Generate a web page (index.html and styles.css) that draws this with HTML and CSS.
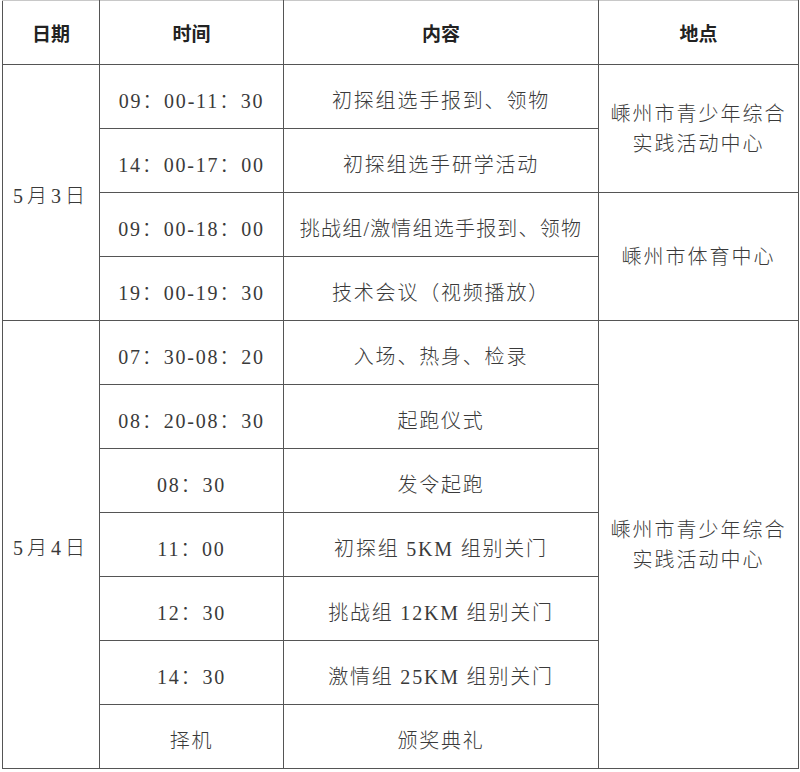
FILE: index.html
```html
<!DOCTYPE html>
<html lang="zh-CN">
<head>
<meta charset="utf-8">
<title>赛事日程</title>
<link rel="stylesheet" href="styles.css">
</head>
<body>
<table class="schedule">
  <colgroup>
    <col class="c-date">
    <col class="c-time">
    <col class="c-content">
    <col class="c-place">
  </colgroup>
  <thead>
    <tr>
      <th>日期</th>
      <th>时间</th>
      <th>内容</th>
      <th>地点</th>
    </tr>
  </thead>
  <tbody>
    <tr>
      <td class="date" rowspan="4">5月3日</td>
      <td>09：00-11：30</td>
      <td>初探组选手报到、领物</td>
      <td class="place" rowspan="2">嵊州市青少年综合<br>实践活动中心</td>
    </tr>
    <tr>
      <td>14：00-17：00</td>
      <td>初探组选手研学活动</td>
    </tr>
    <tr>
      <td>09：00-18：00</td>
      <td class="tight">挑战组/激情组选手报到、领物</td>
      <td class="place" rowspan="2">嵊州市体育中心</td>
    </tr>
    <tr>
      <td>19：00-19：30</td>
      <td>技术会议（视频播放）</td>
    </tr>
    <tr>
      <td class="date" rowspan="7">5月4日</td>
      <td>07：30-08：20</td>
      <td>入场、热身、检录</td>
      <td class="place" rowspan="7">嵊州市青少年综合<br>实践活动中心</td>
    </tr>
    <tr>
      <td>08：20-08：30</td>
      <td>起跑仪式</td>
    </tr>
    <tr>
      <td>08：30</td>
      <td>发令起跑</td>
    </tr>
    <tr>
      <td>11：00</td>
      <td>初探组 5KM 组别关门</td>
    </tr>
    <tr>
      <td>12：30</td>
      <td>挑战组 12KM 组别关门</td>
    </tr>
    <tr>
      <td>14：30</td>
      <td>激情组 25KM 组别关门</td>
    </tr>
    <tr>
      <td>择机</td>
      <td>颁奖典礼</td>
    </tr>
  </tbody>
</table>
</body>
</html>
```
FILE: styles.css
```css
html, body {
  margin: 0;
  padding: 0;
  background: #ffffff;
}

body {
  font-family: "Liberation Serif", "Noto Sans CJK SC", serif;
  color: #3a3a3a;
}

.schedule {
  margin-left: 2px;
  width: 796px;
  border-collapse: collapse;
  table-layout: fixed;
}

.c-date { width: 97px; }
.c-time { width: 184px; }
.c-content { width: 315px; }
.c-place { width: 200px; }

.schedule tr {
  height: 64px;
}

.schedule th,
.schedule td {
  border: 1px solid #555555;
  padding: 0 4px;
  text-align: center;
  vertical-align: middle;
  white-space: nowrap;
}

.schedule th {
  font-family: "Noto Sans CJK SC", sans-serif;
  font-weight: 700;
  font-size: 19px;
  color: #222222;
  letter-spacing: 0;
}

.schedule td {
  font-weight: 300;
  font-size: 20px;
  letter-spacing: 1.8px;
  line-height: 30px;
  padding-top: 8px;
}

.schedule thead th {
  border-top-color: #c8c8c8;
}

.schedule td.tight {
  letter-spacing: 1.2px;
  padding-left: 0;
  padding-right: 0;
}

.schedule td.date {
  letter-spacing: 4px;
  padding: 6px 2px 0;
}

.schedule td.place {
  letter-spacing: 2px;
  padding: 1px 2px 0;
}
```
